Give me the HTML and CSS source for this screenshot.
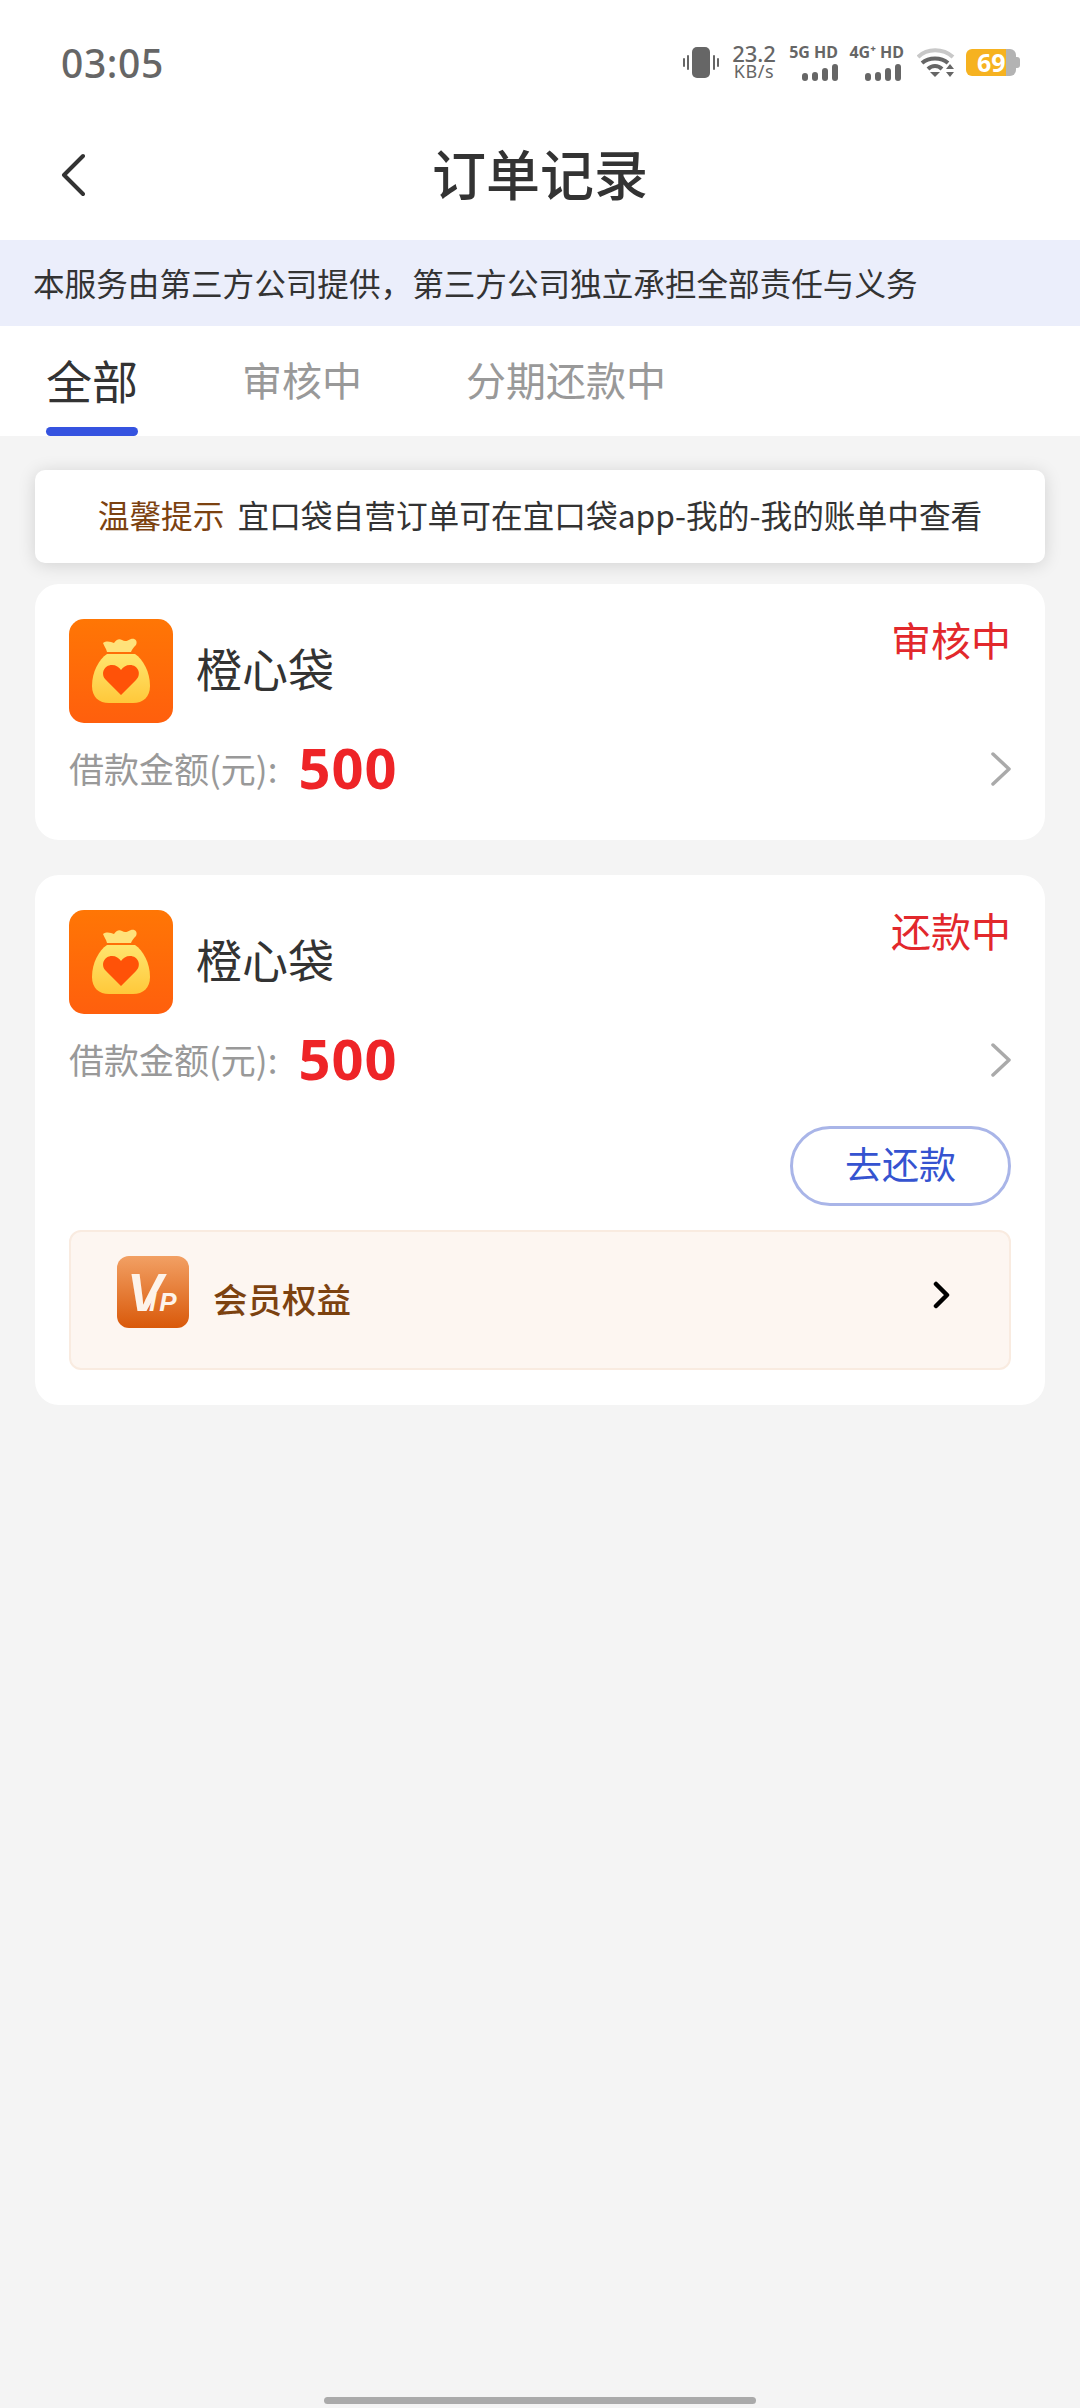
FILE: index.html
```html
<!DOCTYPE html>
<html lang="zh-CN">
<head>
    <meta charset="UTF-8">
    <meta name="viewport" content="width=device-width, initial-scale=1.0">
    <title>订单记录</title>
    <link rel="stylesheet" href="styles.css">
</head>
<body>
    <svg class="sprite" width="0" height="0">
        <defs>
            <linearGradient id="bagBg" x1="0" y1="0" x2="0" y2="1">
                <stop offset="0" stop-color="#ff7605"/>
                <stop offset="1" stop-color="#ff5f0d"/>
            </linearGradient>
            <linearGradient id="bagBody" x1="0" y1="0" x2="0" y2="1">
                <stop offset="0" stop-color="#ffe56e"/>
                <stop offset="1" stop-color="#ffc83a"/>
            </linearGradient>
            <symbol id="bagIcon" viewBox="0 0 104 104">
                <rect width="104" height="104" rx="15" fill="url(#bagBg)"/>
                <path d="M38 33c-1-4-3-6-4-9 4-3 8-1 11 0 2-3 5-5 8-3 3 2 5 1 9-1 4-1 7 2 5 6-2 2-4 4-5 7z" fill="#ffe27a"/>
                <path d="M38 35h28c8 5 15 18 15 32 0 11-7 17-17 17H40c-10 0-17-6-17-17 0-14 7-27 15-32z" fill="url(#bagBody)"/>
                <path d="M52 76 37 61c-6-6-2-15 6-15 4 0 7 2 9 5 2-3 5-5 9-5 8 0 12 9 6 15z" fill="#ff5208"/>
            </symbol>
            <symbol id="signalBars" viewBox="0 0 36 17">
                <rect x="0" y="9" width="6" height="8" rx="3"/>
                <rect x="10" y="8" width="6" height="9" rx="3"/>
                <rect x="20" y="4" width="6" height="13" rx="3"/>
                <rect x="30" y="0" width="6" height="17" rx="3"/>
            </symbol>
        </defs>
    </svg>

    <div class="status-bar">
        <span class="clock">03:05</span>
        <div class="status-icons">
            <svg class="vibrate" width="36" height="31" viewBox="0 0 36 31">
                <rect x="9" y="0" width="18" height="31" rx="5"/>
                <rect x="4" y="8" width="2" height="15" rx="1"/>
                <rect x="30" y="8" width="2" height="15" rx="1"/>
                <rect x="0" y="11" width="2" height="9" rx="1"/>
                <rect x="34" y="11" width="2" height="9" rx="1"/>
            </svg>
            <div class="speed"><span>23.2</span><span class="speed-unit">KB/s</span></div>
            <div class="net net-5g">
                <span>5G HD</span>
                <svg width="36" height="17"><use href="#signalBars"/></svg>
            </div>
            <div class="net net-4g">
                <span>4G⁺ HD</span>
                <svg width="36" height="17"><use href="#signalBars"/></svg>
            </div>
            <svg class="wifi" width="38" height="31" viewBox="0 0 38 31">
                <path d="M1 10C10 1 26 1 36 10" class="wifi-off"/>
                <path d="M5 16C12 10 24 10 31 16" class="wifi-on"/>
                <path d="M11 22C15 18 21 18 25 22" class="wifi-on"/>
                <path d="M13 25h10l-5 5z" fill="#666"/>
                <path d="M33 17l4 5h-8zM29 25h8l-4 5z" fill="#666"/>
            </svg>
            <div class="battery"><span class="battery-num">69</span></div>
        </div>
    </div>

    <div class="nav">
        <svg class="back" width="24" height="44" viewBox="0 0 24 44">
            <path d="M22 3 3 22l19 19"/>
        </svg>
        <h1>订单记录</h1>
    </div>

    <div class="banner">本服务由第三方公司提供，第三方公司独立承担全部责任与义务</div>

    <div class="tabs">
        <div class="tab active">全部</div>
        <div class="tab">审核中</div>
        <div class="tab">分期还款中</div>
    </div>

    <div class="content">
        <div class="notice"><span class="notice-tag">温馨提示</span>宜口袋自营订单可在宜口袋app-我的-我的账单中查看</div>

        <!-- 审核中 -->
        <div class="card">
            <div class="card-head">
                <svg class="app-icon"><use href="#bagIcon"/></svg>
                <span class="app-name">橙心袋</span>
                <span class="order-state">审核中</span>
            </div>
            <div class="amount-row">
                <span class="amount-label">借款金额(元):</span>
                <span class="amount">500</span>
                <svg class="row-arrow" width="22" height="34" viewBox="0 0 22 34"><path d="M3 2l16 15L3 32"/></svg>
            </div>
        </div>

        <!-- 还款中 -->
        <div class="card">
            <div class="card-head">
                <svg class="app-icon"><use href="#bagIcon"/></svg>
                <span class="app-name">橙心袋</span>
                <span class="order-state">还款中</span>
            </div>
            <div class="amount-row">
                <span class="amount-label">借款金额(元):</span>
                <span class="amount">500</span>
                <svg class="row-arrow" width="22" height="34" viewBox="0 0 22 34"><path d="M3 2l16 15L3 32"/></svg>
            </div>
            <div class="actions">
                <button class="repay">去还款</button>
            </div>
            <div class="vip">
                <svg class="vip-logo" width="72" height="72" viewBox="0 0 72 72">
                    <defs>
                        <linearGradient id="vipBg" x1="0" y1="0" x2="0" y2="1">
                            <stop offset="0" stop-color="#f2a064"/>
                            <stop offset="1" stop-color="#d9590a"/>
                        </linearGradient>
                    </defs>
                    <rect width="72" height="72" rx="12" fill="url(#vipBg)"/>
                    <text x="10" y="55" class="vip-mark"><tspan class="vip-v">V</tspan><tspan class="vip-ip" dx="-14">IP</tspan></text>
                </svg>
                <span class="vip-text">会员权益</span>
                <svg class="vip-arrow" width="18" height="28" viewBox="0 0 18 28"><path d="M3 3l11 11L3 25"/></svg>
            </div>
        </div>
    </div>

    <div class="home-bar"></div>
</body>
</html>
```

FILE: styles.css
```css
* {
    margin: 0;
    padding: 0;
    box-sizing: border-box;
}

html, body {
    height: 100%;
}

body {
    font-family: "Noto Sans CJK SC", "Noto Sans", sans-serif;
    background: #f4f4f4;
    color: #333;
    display: flex;
    flex-direction: column;
    overflow: hidden;
}

.sprite {
    display: block;
}

.status-bar {
    height: 124px;
    padding: 0 60px 0 61px;
    background: #fff;
    display: flex;
    align-items: center;
    justify-content: space-between;
}

.clock {
    font-family: "Noto Sans", sans-serif;
    font-size: 39px;
    font-weight: 500;
    color: #666;
    letter-spacing: 0.6px;
}

.status-icons {
    display: flex;
    align-items: center;
    color: #666;
}

.vibrate {
    fill: #666;
    margin-right: 12px;
}

.speed {
    width: 46px;
    margin-right: 13px;
    display: flex;
    flex-direction: column;
    align-items: center;
    font-family: "Noto Sans", sans-serif;
    font-size: 22px;
    font-weight: 500;
    line-height: 18px;
}

.speed-unit {
    font-size: 18px;
    font-weight: 400;
    letter-spacing: 0.6px;
}

.net {
    display: flex;
    flex-direction: column;
    align-items: flex-end;
    gap: 3px;
    font-family: "Noto Sans", sans-serif;
    font-size: 16px;
    font-weight: 700;
    line-height: 17px;
    white-space: nowrap;
}

.net svg {
    fill: #666;
    display: block;
}

.net-5g {
    width: 48px;
    margin-right: 10px;
}

.net-4g {
    width: 56px;
    margin-right: 13px;
}

.net-4g svg {
    margin-right: 3px;
}

.wifi {
    margin-right: 11px;
    fill: none;
}

.wifi-off, .wifi-on {
    fill: none;
    stroke-width: 4;
}

.wifi-off {
    stroke: #c8c8c8;
}

.wifi-on {
    stroke: #666;
}

.battery {
    width: 50px;
    height: 27px;
    margin-right: 4px;
    border-radius: 6px;
    background: linear-gradient(90deg, #f6b220 0, #f6b220 40px, #b3b3b3 40px);
    position: relative;
    display: flex;
    align-items: center;
    padding-left: 11px;
}

.battery::after {
    content: "";
    position: absolute;
    right: -4px;
    top: 8px;
    width: 4px;
    height: 11px;
    border-radius: 0 3px 3px 0;
    background: #b3b3b3;
}

.battery-num {
    font-family: "Noto Sans", sans-serif;
    font-size: 25px;
    font-weight: 700;
    color: #fff;
    line-height: 27px;
}

.nav {
    height: 116px;
    padding-bottom: 18px;
    background: #fff;
    display: flex;
    align-items: center;
    justify-content: center;
    position: relative;
}

.back {
    position: absolute;
    left: 61px;
    top: 29px;
    fill: none;
    stroke: #333;
    stroke-width: 4;
    stroke-linecap: round;
    stroke-linejoin: round;
}

.nav h1 {
    font-size: 54px;
    font-weight: 500;
    color: #333;
    line-height: 72px;
}

.banner {
    height: 86px;
    padding-left: 33px;
    background: #ebeefb;
    font-size: 31.6px;
    line-height: 84px;
    color: #333;
    white-space: nowrap;
}

.tabs {
    height: 110px;
    background: #fff;
    display: flex;
    padding-left: 46px;
    gap: 104px;
}

.tab {
    font-size: 40px;
    line-height: 106px;
    color: #999;
    position: relative;
}

.tab.active {
    font-size: 46px;
    color: #333;
}

.tab.active::after {
    content: "";
    position: absolute;
    left: 0;
    right: 0;
    bottom: 0;
    height: 9px;
    border-radius: 5px;
    background: #3553e0;
}

.content {
    flex: 1;
    padding: 34px 35px 0;
    display: flex;
    flex-direction: column;
}

.notice {
    height: 93px;
    margin-bottom: 21px;
    background: #fff;
    border-radius: 10px;
    box-shadow: 0 2px 18px rgba(0, 0, 0, 0.14);
    text-align: center;
    font-size: 31.7px;
    line-height: 88px;
    color: #333;
    white-space: nowrap;
}

.notice-tag {
    margin-right: 13px;
    color: #7c4210;
}

.card {
    background: #fff;
    border-radius: 24px;
    padding: 35px 34px;
    margin-bottom: 35px;
}

.card-head {
    display: flex;
    align-items: center;
    height: 104px;
}

.app-icon {
    width: 104px;
    height: 104px;
    flex-shrink: 0;
}

.app-name {
    margin-left: 23px;
    padding-bottom: 8px;
    font-size: 46px;
    color: #333;
}

.order-state {
    margin-left: auto;
    margin-top: -3px;
    align-self: flex-start;
    font-size: 40px;
    line-height: 46px;
    color: #e2282c;
}

.amount-row {
    display: flex;
    align-items: center;
    height: 82px;
    padding-top: 6px;
}

.amount-label {
    font-size: 35px;
    color: #999;
}

.amount {
    margin-left: 21px;
    font-family: "Open Sans", sans-serif;
    font-size: 56px;
    font-weight: 700;
    color: #ee2427;
    letter-spacing: 1px;
}

.row-arrow {
    margin-left: auto;
    margin-top: 4px;
    margin-right: -1px;
    fill: none;
    stroke: #aaa;
    stroke-width: 3.5;
    stroke-linecap: round;
    stroke-linejoin: round;
}

.actions {
    display: flex;
    justify-content: flex-end;
    margin-top: 30px;
}

.repay {
    width: 221px;
    height: 80px;
    padding-bottom: 6px;
    border: 3px solid #a9b5e8;
    border-radius: 40px;
    background: #fff;
    font-family: inherit;
    font-size: 37px;
    color: #3553d0;
}

.vip {
    height: 140px;
    margin-top: 24px;
    padding: 0 46px 16px;
    background: #fdf6f1;
    border: 2px solid #f9ebe0;
    border-radius: 12px;
    display: flex;
    align-items: center;
}

.vip-logo {
    flex-shrink: 0;
}

.vip-mark {
    font-family: "Liberation Sans", sans-serif;
    font-weight: 700;
    font-style: italic;
    fill: #fdf3ea;
}

.vip-v {
    font-size: 54px;
}

.vip-ip {
    font-size: 26px;
    letter-spacing: 3px;
}

.vip-text {
    margin-left: 24px;
    font-size: 34.5px;
    font-weight: 500;
    color: #7c4210;
    position: relative;
    top: 6px;
}

.vip-arrow {
    margin-left: auto;
    margin-top: 6px;
    margin-right: 12px;
    fill: none;
    stroke: #000;
    stroke-width: 4.5;
    stroke-linecap: round;
    stroke-linejoin: round;
}

.home-bar {
    height: 7px;
    width: 432px;
    margin: 0 auto 4px;
    border-radius: 4px;
    background: #aaa;
}
```
